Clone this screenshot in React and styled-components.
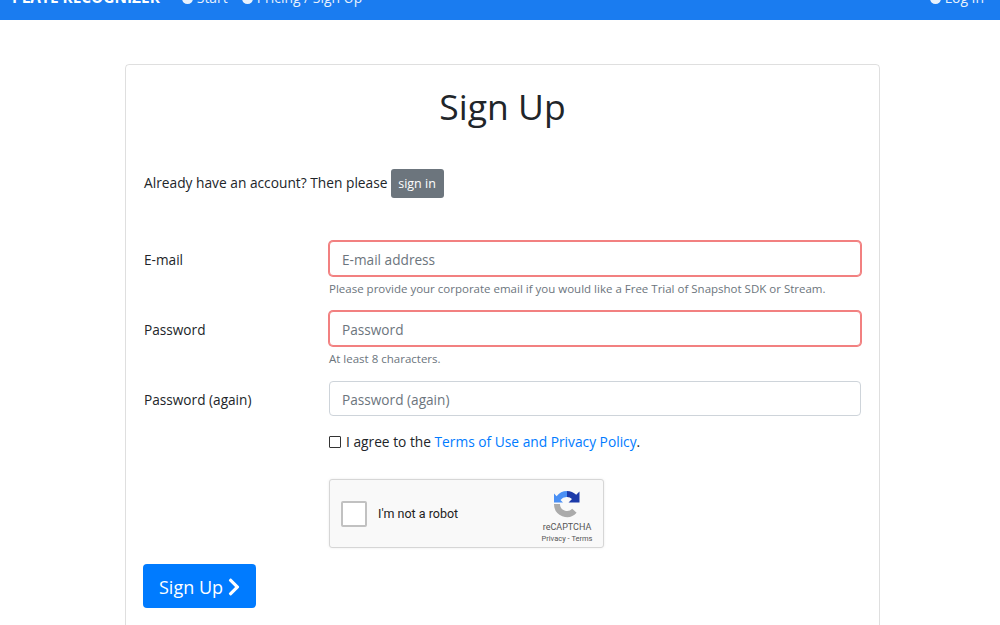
import React from "react";
import styled, { createGlobalStyle } from "styled-components";
import { FaChevronRight } from "react-icons/fa";

const GlobalStyle = createGlobalStyle`
  html, body {
    margin: 0;
    height: 625px;
    overflow: hidden;
    background: #fff;
    font-family: "Open Sans", "Noto Sans", sans-serif;
    color: #212529;
  }
`;

const Navbar = styled.nav`
  margin-top: -36px;
  height: 56px;
  box-sizing: border-box;
  background: #1a7cf0;
  color: #fff;
  display: flex;
  align-items: flex-end;
  padding: 0 16px 12px 12px;
  font-size: 13.9px;
  line-height: 20px;
`;

const Brand = styled.span`
  font-weight: 700;
  font-size: 15.4px;
  margin-right: 22px;
`;

const NavLink = styled.span`
  display: flex;
  align-items: center;
  gap: 4px;
  margin-right: 14px;
  opacity: 0.9;
  ${(p) => p.$right && "margin-left: auto; margin-right: 0;"}
`;

const NavDot = styled.i`
  width: 11px;
  height: 11px;
  border-radius: 50%;
  background: #fff;
`;

const Card = styled.main`
  width: 755px;
  box-sizing: border-box;
  margin: 44px 0 0 125px;
  border: 1px solid rgba(0, 0, 0, 0.125);
  border-radius: 4px;
  padding: 18px 18px 40px;
`;

const Title = styled.h1`
  margin: 0 0 38px;
  text-align: center;
  font-size: 35.5px;
  font-weight: 400;
  line-height: 46px;
`;

const SignInLine = styled.p`
  margin: 0 0 44px;
  display: flex;
  align-items: center;
  gap: 3px;
  font-size: 13.75px;
  height: 30px;
`;

const SignInButton = styled.a`
  background: #6c757d;
  color: #fff;
  border-radius: 3px;
  font-size: 12.5px;
  width: 53px;
  height: 29px;
  margin-top: 2px;
  display: flex;
  align-items: center;
  justify-content: center;
`;

const Row = styled.div`
  display: grid;
  grid-template-columns: 185px 1fr;
  margin-bottom: ${(p) => p.$gap}px;
`;

const Label = styled.label`
  font-size: 13.65px;
  line-height: 38px;
`;

const Input = styled.input`
  display: block;
  width: 100%;
  height: 35px;
  box-sizing: border-box;
  padding: 1px 12px 0;
  font: 13.65px "Open Sans", "Noto Sans", sans-serif;
  background: #fff;
  border-radius: 4px;
  border: 1px solid ${(p) => (p.$invalid ? "#f28080" : "#ced4da")};
  box-shadow: ${(p) => (p.$invalid ? "0 0 0 1px #f28080" : "none")};
  outline: none;
  &::placeholder {
    color: #6c757d;
    opacity: 1;
  }
`;

const Help = styled.small`
  display: block;
  margin-top: 5px;
  font-size: 11.5px;
  line-height: 15px;
  color: #6c757d;
`;

const AgreeLine = styled.label`
  grid-column: 2;
  display: flex;
  align-items: center;
  font-size: 13.75px;
  line-height: 20px;
  gap: 5px;
`;

const Check = styled.span`
  width: 10px;
  height: 10px;
  border: 1px solid #333;
  border-radius: 1px;
`;

const Link = styled.a`
  color: #007bff;
`;

const Captcha = styled.div`
  grid-column: 2;
  width: 275px;
  height: 69px;
  box-sizing: border-box;
  background: #f9f9f9;
  border: 1px solid #d6d6d6;
  border-radius: 3px;
  box-shadow: 0 0 3px rgba(0, 0, 0, 0.08);
  display: flex;
  align-items: center;
  padding: 0 9px 0 11px;
  font-family: Roboto, sans-serif;
`;

const CaptchaBox = styled.span`
  width: 22px;
  height: 22px;
  background: #fff;
  border: 2px solid #c1c1c1;
  border-radius: 2px;
`;

const CaptchaLabel = styled.span`
  font-size: 12.5px;
  margin-left: 11px;
  color: #222;
  flex: 1;
`;

const CaptchaBrand = styled.div`
  align-self: flex-start;
  width: 54px;
  padding-top: 10px;
  display: flex;
  flex-direction: column;
  align-items: center;
  color: #555;
  font-size: 9px;
  line-height: 11px;
  svg {
    margin-bottom: 4px;
  }
`;

const CaptchaLinks = styled.span`
  font-size: 7.5px;
  white-space: nowrap;
`;

const SubmitButton = styled.button`
  display: flex;
  align-items: center;
  gap: 1px;
  width: 113px;
  height: 44px;
  margin-left: -1px;
  padding: 1px 0 0 16px;
  border: 0;
  border-radius: 4px;
  background: #007bff;
  color: #fff;
  font: 18px "Open Sans", "Noto Sans", sans-serif;
`;

function CaptchaLogo() {
  return (
    <svg width="28" height="28" viewBox="0 0 28 28">
      <path d="M14 1A13 13 0 0 1 23.200 4.800L26.500 1.500V12.500H15.500L19 9A7 7 0 0 0 14 7Z" fill="#1c3aa9" />
      <path d="M14 1A13 13 0 0 0 3.600 6.200L1 3.500V12.500H10L7.500 10A7.500 7.500 0 0 1 14 7Z" fill="#4a90f5" />
      <path d="M1 14H7A7 7 0 0 0 19.200 18.700L23.600 22.800A13 13 0 0 1 1 14Z" fill="#ababab" />
    </svg>
  );
}

export default function App() {
  return (
    <>
      <GlobalStyle />
      <Navbar>
        <Brand>PLATE RECOGNIZER</Brand>
        <NavLink><NavDot />Start</NavLink>
        <NavLink><NavDot />Pricing / Sign Up</NavLink>
        <NavLink $right><NavDot />Log In</NavLink>
      </Navbar>
      <Card>
        <Title>Sign Up</Title>
        <SignInLine>
          Already have an account? Then please <SignInButton>sign in</SignInButton>
        </SignInLine>
        <Row $gap={15}>
          <Label>E-mail</Label>
          <div>
            <Input $invalid placeholder="E-mail address" />
            <Help>Please provide your corporate email if you would like a Free Trial of Snapshot SDK or Stream.</Help>
          </div>
        </Row>
        <Row $gap={15}>
          <Label>Password</Label>
          <div>
            <Input $invalid placeholder="Password" />
            <Help>At least 8 characters.</Help>
          </div>
        </Row>
        <Row $gap={13}>
          <Label>Password (again)</Label>
          <Input placeholder="Password (again)" />
        </Row>
        <Row $gap={27}>
          <AgreeLine>
            <Check />
            <span>I agree to the <Link>Terms of Use and Privacy Policy</Link>.</span>
          </AgreeLine>
        </Row>
        <Row $gap={16}>
          <Captcha>
            <CaptchaBox />
            <CaptchaLabel>I'm not a robot</CaptchaLabel>
            <CaptchaBrand>
              <CaptchaLogo />
              reCAPTCHA
              <CaptchaLinks>Privacy - Terms</CaptchaLinks>
            </CaptchaBrand>
          </Captcha>
        </Row>
        <SubmitButton>
          Sign Up <FaChevronRight size={20} />
        </SubmitButton>
      </Card>
    </>
  );
}
